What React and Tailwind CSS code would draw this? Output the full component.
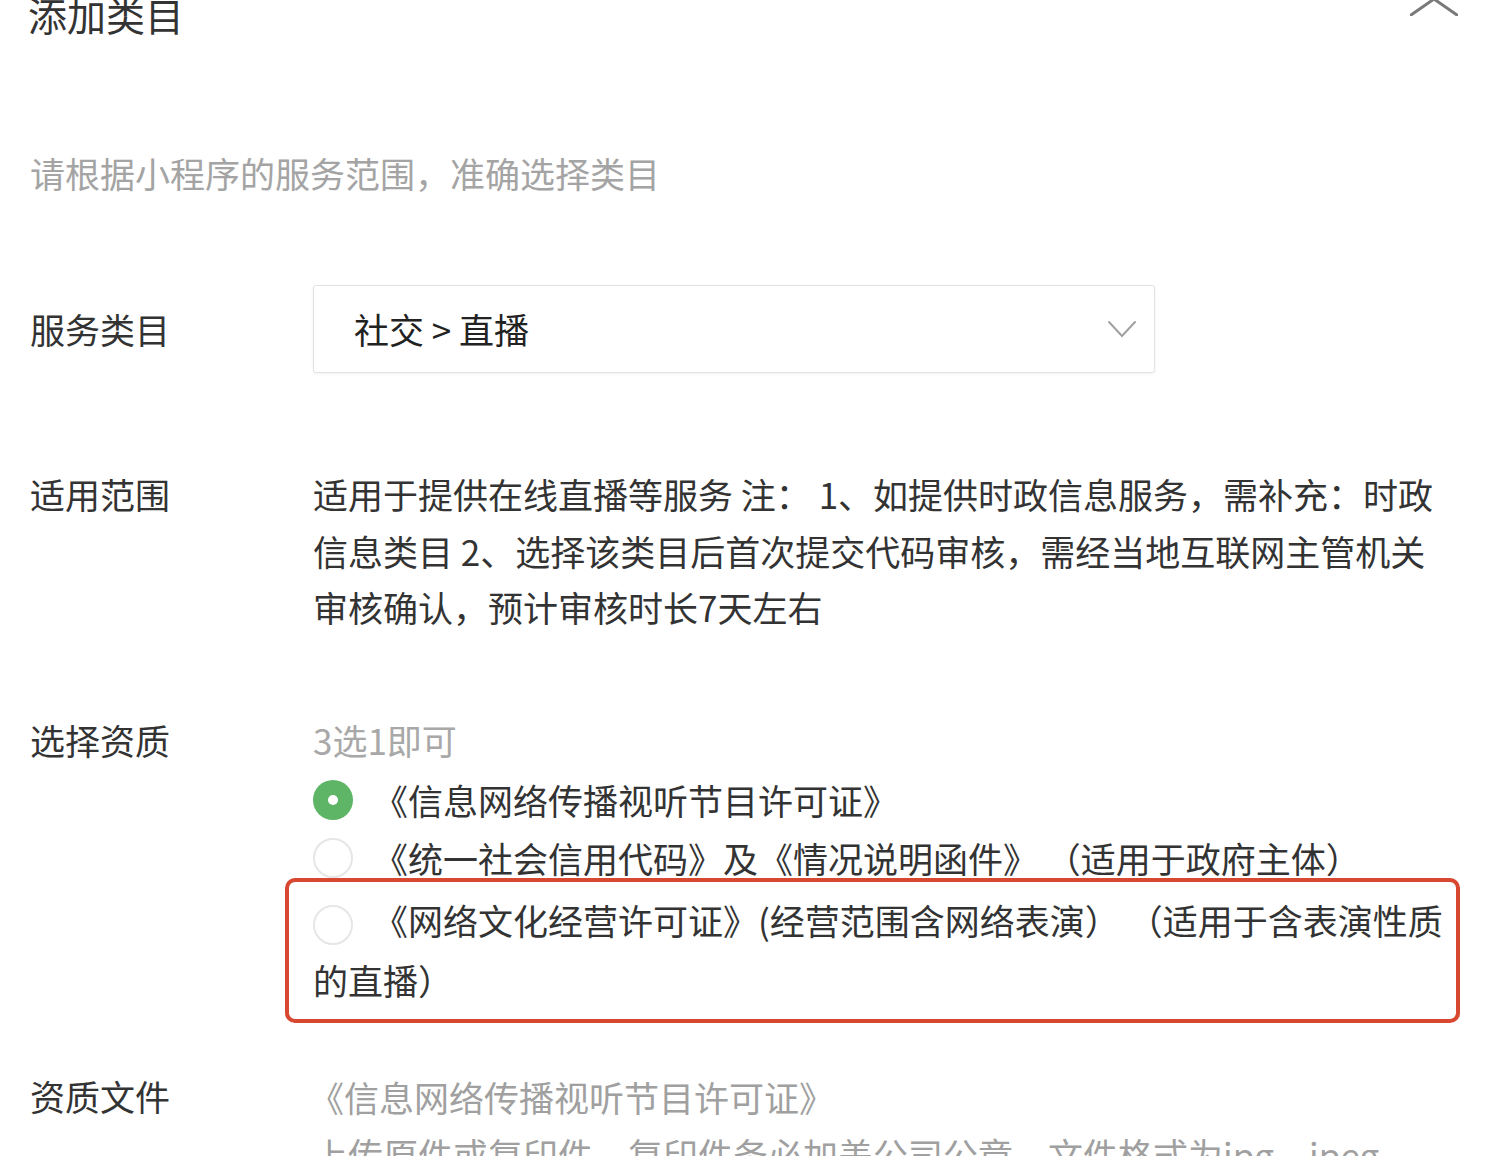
import { useState } from "react";

const font = { fontFamily: '"Noto Sans CJK SC", "Noto Sans", sans-serif' };

function Radio({ checked }) {
  if (checked) {
    return (
      <span className="inline-flex h-[40px] w-[40px] shrink-0 items-center justify-center rounded-full bg-[#5db565] align-middle">
        <span className="h-[10px] w-[10px] rounded-full bg-white" />
      </span>
    );
  }
  return (
    <span className="inline-block h-[40px] w-[40px] shrink-0 rounded-full border-2 border-[#e6e6e6] bg-white align-middle" />
  );
}

function Row({ label, children, className = "" }) {
  return (
    <div className={`flex ${className}`}>
      <div className="w-[283px] shrink-0 text-[35px] leading-[56px] text-[#333]">{label}</div>
      <div className="flex-1">{children}</div>
    </div>
  );
}

export default function App() {
  const [picked, setPicked] = useState(0);

  const options = [
    "《信息网络传播视听节目许可证》",
    "《统一社会信用代码》及《情况说明函件》 （适用于政府主体）",
  ];

  return (
    <div className="min-h-screen w-full overflow-hidden bg-white pl-[30px] pr-[36px]" style={font}>
      {/* Header */}
      <div className="-mt-[10px] flex h-[48px] items-center justify-between">
        <h1 className="-ml-[2px] text-[39px] font-normal leading-[48px] text-[#333]">添加类目</h1>
        <svg width="48" height="34" viewBox="0 0 48 34" className="mr-[2px] -mt-[30px]" fill="none" stroke="#7a7a7a" strokeWidth="3" strokeLinecap="round">
          <line x1="1" y1="33" x2="47" y2="1" />
          <line x1="1" y1="1" x2="47" y2="33" />
        </svg>
      </div>

      <p className="mt-[107px] text-[35px] leading-[56px] text-[#a4a4a4]">请根据小程序的服务范围，准确选择类目</p>

      {/* 服务类目 */}
      <Row label="服务类目" className="mt-[84px] items-center">
        <div className="flex h-[88px] w-[842px] items-center justify-between rounded-[3px] border border-[#e3e3e3] bg-white pl-[40px] pr-[17px] shadow-[0_1px_3px_rgba(0,0,0,0.06)]">
          <span className="text-[35px] leading-[56px] text-[#222]">社交 &gt; 直播</span>
          <svg width="30" height="18" viewBox="0 0 30 18" fill="none" stroke="#a0a0a0" strokeWidth="2" strokeLinecap="round">
            <polyline points="2,2 15,16 28,2" />
          </svg>
        </div>
      </Row>

      {/* 适用范围 */}
      <Row label="适用范围" className="mt-[93px]">
        <p className="text-[35px] leading-[56.5px] text-[#333]">
          适用于提供在线直播等服务 注： 1、如提供时政信息服务，需补充：时政
          <br />
          信息类目 2、选择该类目后首次提交代码审核，需经当地互联网主管机关
          <br />
          审核确认，预计审核时长7天左右
        </p>
      </Row>

      {/* 选择资质 */}
      <Row label="选择资质" className="mt-[76px]">
        <p className="text-[35px] leading-[56px] text-[#a8a8a8]">3选1即可</p>
        <div className="mt-[3px] flex flex-col">
          {options.map((o, i) => (
            <button
              key={o}
              type="button"
              onClick={() => setPicked(i)}
              className="flex h-[58px] items-center gap-[20px] text-left text-[35px] text-[#333]"
            >
              <Radio checked={picked === i} />
              <span className="leading-[58px] whitespace-nowrap">{o}</span>
            </button>
          ))}
          <div className="relative mt-[3px]" onClick={() => setPicked(2)}>
            <div className="pointer-events-none absolute -left-[28px] -top-[12px] h-[145px] w-[1175px] rounded-[10px] border-4 border-[#d8472f]" />
            <p className="text-[35px] leading-[60px] text-[#333]">
              <Radio checked={picked === 2} />
              <span className="ml-[20px]">《网络文化经营许可证》(经营范围含网络表演） （适用于含表演性质</span>
              <br />
              的直播）
            </p>
          </div>
        </div>
      </Row>

      {/* 资质文件 */}
      <Row label="资质文件" className="mt-[58px]">
        <p className="text-[35px] leading-[57px] text-[#a0a0a0]">
          <span className="-ml-[4px]">《信息网络传播视听节目许可证》</span>
          <br />
          上传原件或复印件，复印件务必加盖公司公章，文件格式为jpg、jpeg
        </p>
      </Row>
    </div>
  );
}
